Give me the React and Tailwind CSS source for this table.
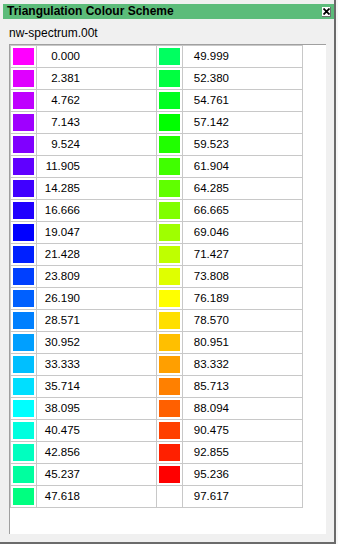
import React from "react"

const VALUES = [
  "0.000", "2.381", "4.762", "7.143", "9.524", "11.905", "14.285", "16.666",
  "19.047", "21.428", "23.809", "26.190", "28.571", "30.952", "33.333", "35.714",
  "38.095", "40.475", "42.856", "45.237", "47.618", "49.999", "52.380", "54.761",
  "57.142", "59.523", "61.904", "64.285", "66.665", "69.046", "71.427", "73.808",
  "76.189", "78.570", "80.951", "83.332", "85.713", "88.094", "90.475", "92.855",
  "95.236", "97.617",
]

// hue runs from magenta (300) down to red (0) in 7.5 degree steps
const hueColor = (i) => {
  const h = 300 - 7.5 * i
  if (h < 0) return null
  return `hsl(${h}, 100%, 50%)`
}

function Swatch({ i }) {
  const c = hueColor(i)
  return (
    <div className="h-[22px] border-r border-b border-[#c8c8c8] pl-[2px] pt-[2px]">
      {c && <div className="w-[21px] h-[17px]" style={{ background: c }} />}
    </div>
  )
}

function Value({ text, w }) {
  return (
    <div className="h-[22px] border-r border-b border-[#c8c8c8] leading-[21px] text-[11.5px] text-black">
      <div className={`${w} text-right`}>{text}</div>
    </div>
  )
}

export default function App() {
  const rows = Array.from({ length: 21 }, (_, r) => r)
  return (
    <div className="w-[338px] h-[544px] bg-[#f7f7f7] font-['Liberation_Sans',Arial,sans-serif]">
      <div className="w-[336px] h-[544px] bg-[#f0f0f0] border-r-2 border-b-2 border-[#6b6b6b] flex flex-col">
        {/* title bar */}
        <div className="ml-[3px] mt-[4px] w-[331px] h-[15px] bg-[#5cbc7a] flex items-center justify-between pl-[4px] pr-[3px]">
          <span className="text-[12px] font-bold leading-[15px] text-black">Triangulation Colour Scheme</span>
          <div className="w-[9px] h-[10px] bg-white border-r border-b border-[#707070] flex items-center justify-center">
            <svg width="7" height="7" viewBox="0 0 7 7">
              <path d="M0.5 0.5 L6.5 6.5 M6.5 0.5 L0.5 6.5" stroke="#000" strokeWidth="1.8" />
            </svg>
          </div>
        </div>

        <div className="h-[25px] pl-[9px] pt-[6px] text-[12px] leading-[16px] text-black">nw-spectrum.00t</div>

        <div className="ml-[9px] w-[317px] h-[490px] bg-white border-l border-t border-[#a0a0a0]">
          <div className="w-[293px] grid grid-cols-[26px_120px_26px_120px] border-l border-t border-[#c8c8c8]">
            {rows.map((r) => (
              <React.Fragment key={r}>
                <Swatch i={r} />
                <Value text={VALUES[r]} w="w-[43px]" />
                <Swatch i={r + 21} />
                <Value text={VALUES[r + 21]} w="w-[46px]" />
              </React.Fragment>
            ))}
          </div>
        </div>
      </div>
    </div>
  )
}
